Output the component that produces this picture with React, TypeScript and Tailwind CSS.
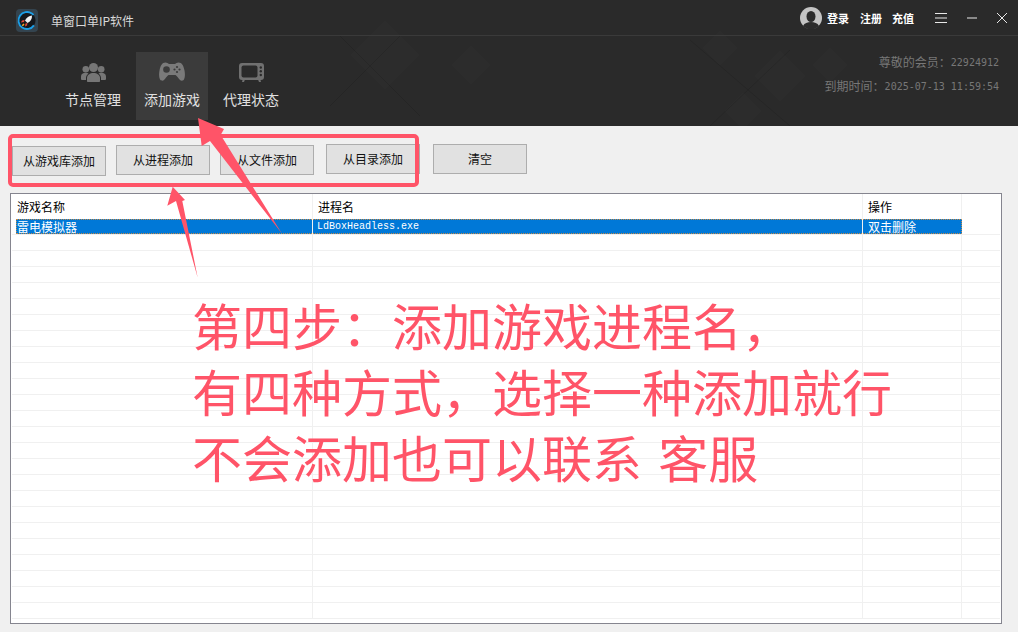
import React from 'react';

const buttons = [
  { label: '从游戏库添加', cls: 'mt-[20px] ml-0' },
  { label: '从进程添加', cls: 'mt-[19px] ml-[10px]' },
  { label: '从文件添加', cls: 'mt-[19px] ml-[10px]' },
  { label: '从目录添加', cls: 'mt-[18px] ml-[12px]' },
  { label: '清空', cls: 'mt-[18px] ml-[13px]' },
];

const emptyRows = Array.from({ length: 24 }, (_, i) => i);

const UsersIcon = () => (
  <svg width="25" height="19" viewBox="0 0 25 19" fill="#767676">
    <circle cx="4.800" cy="6.200" r="3.300" />
    <circle cx="20.200" cy="6.200" r="3.300" />
    <path d="M0 16v-2.500C0 11 2 9.800 4.800 9.800c1.200 0 2 .2 2.700.6-1.500 1.200-2.500 2.800-2.500 4.600v2H1.500C.6 17 0 16.700 0 16z" />
    <path d="M25 16v-2.500c0-2.500-2-3.700-4.800-3.700-1.200 0-2 .2-2.700.6 1.500 1.200 2.500 2.800 2.500 4.600v2h3.500c.9 0 1.500-.3 1.500-1z" />
    <circle cx="12.500" cy="4.500" r="4.500" />
    <path d="M7 19c-.6 0-1-.4-1-1v-3c0-3 3-5 6.500-5s6.500 2 6.500 5v3c0 .6-.4 1-1 1z" />
  </svg>
);

const GamepadIcon = () => (
  <svg width="26" height="20" viewBox="0 0 26 20">
    <path
      d="M6.500 .5C8 .5 9 1.500 10 2h6c1-.5 2-1.500 3.500-1.500 3.500 0 5 3 6 8 .5 3 .8 6-.5 9-1 1.500-3 1.500-4 .5-1.500-1.500-3-4-4.500-5H9.500C8 14 6.500 16.500 5 18c-1 1-3 1-4-.5-1.300-3-1-6-.5-9 1-5 2.500-8 6-8z"
      fill="#7a7a7a"
    />
    <circle cx="7.500" cy="7.500" r="3.300" fill="#3b3b3b" />
    <g fill="#3b3b3b">
      <circle cx="18" cy="5" r="1.100" />
      <circle cx="18" cy="10" r="1.100" />
      <circle cx="15.500" cy="7.500" r="1.100" />
      <circle cx="20.500" cy="7.500" r="1.100" />
    </g>
  </svg>
);

const TvIcon = () => (
  <svg width="25" height="19" viewBox="0 0 25 19" fill="#707070">
    <path d="M3 0h19a3 3 0 0 1 3 3v11a3 3 0 0 1-3 3h-.5l.5 2h-2l-.8-2H5.800L5 19H3l.5-2H3a3 3 0 0 1-3-3V3a3 3 0 0 1 3-3z" />
    <rect x="2.500" y="2.500" width="16" height="12" rx="2" fill="#2a2a2a" />
    <circle cx="21.800" cy="4.500" r="1.200" fill="#2a2a2a" />
    <circle cx="21.800" cy="8.300" r="1.200" fill="#2a2a2a" />
    <circle cx="21.800" cy="12" r="1.200" fill="#2a2a2a" />
  </svg>
);

const Logo = () => (
  <svg width="22" height="23" viewBox="0 0 22 23">
    <rect width="22" height="23" rx="4" fill="#34444f" />
    <circle cx="11" cy="11.500" r="8.500" fill="#15181c" stroke="#1b9fe8" strokeWidth="1.800" strokeDasharray="42 12" transform="rotate(35 11 11.500)" />
    <path d="M16 6.500c-3 .3-5.500 2-7 5l2.500 2.500c3-1.500 4.700-4 4.500-7.500z" fill="#f2f2f2" />
    <path d="M8.500 11 6 11.500l-1 2 3-.5zM11.500 14l-.5 2.500-2 1 .5-3z" fill="#e04a3c" />
    <path d="M7.500 14.500c-1 .5-1.500 1.500-1.500 2.500 1 0 2-.5 2.500-1.500z" fill="#f5a623" />
  </svg>
);

const Avatar = () => (
  <svg width="22" height="22" viewBox="0 0 22 22">
    <circle cx="11" cy="11" r="11" fill="#c4c4c4" />
    <ellipse cx="11" cy="9.500" rx="4.500" ry="5.500" fill="#2c2c2c" />
    <path d="M3 19c1.500-3 4.500-4 8-4s6.500 1 8 4a11 11 0 0 1-16 0z" fill="#2c2c2c" />
  </svg>
);

export default function App() {
  return (
    <div className="relative flex h-[632px] w-[1018px] flex-col overflow-hidden bg-[#f0f0f0] font-['Noto_Sans_CJK_SC',sans-serif]">
      <header className="relative h-[126px] shrink-0 overflow-hidden bg-[#2a2a2a]">
        {/* faint diamond texture behind the nav */}
        <svg className="absolute inset-0" width="1018" height="126" viewBox="0 0 1018 126">
          <g fill="#ffffff" fillOpacity="0.01">
            <path d="M471 45 491 65 471 85 451 65z" />
            <path d="M385 20 420 55 385 90 350 55z" />
            <path d="M720 30 738 48 720 66 702 48z" />
            <path d="M830 47 848 65 830 83 812 65z" />
            <path d="M743 92 762 111 743 130 724 111z" />
            <path d="M780 50 806 76 780 102 754 76z" />
          </g>
          <g stroke="#000000" strokeOpacity="0.1" fill="none">
            <path d="M340 36 420 116M400 36 330 106" />
            <path d="M690 40 790 126M790 50 710 126" />
          </g>
        </svg>

        <div className="relative flex h-[36px] items-center border-b border-[#3a3a3a] pl-[16px] pr-[11px]">
          <div className="mt-[5px] flex">
            <Logo />
          </div>
          <span className="ml-[13px] mt-[6px] text-[12px] text-[#d8d8d8]">单窗口单IP软件</span>
          <div className="ml-auto flex items-center">
            <Avatar />
            <span className="ml-[5px] mt-[2px] text-[11px] font-bold text-white">登录</span>
            <span className="ml-[11px] mt-[2px] text-[11px] font-bold text-white">注册</span>
            <span className="ml-[10px] mt-[2px] text-[11px] font-bold text-white">充值</span>
            <svg className="ml-[21px]" width="12" height="10" viewBox="0 0 12 10" stroke="#e8e8e8" strokeWidth="1">
              <path d="M0 .5h12M0 5h12M0 9.500h12" />
            </svg>
            <svg className="ml-[20px]" width="10" height="2" viewBox="0 0 10 2" stroke="#e8e8e8" strokeWidth="1">
              <path d="M0 1h10" />
            </svg>
            <svg className="ml-[20px]" width="10" height="10" viewBox="0 0 10 10" stroke="#e8e8e8" strokeWidth="1">
              <path d="m0 0 10 10M10 0 0 10" />
            </svg>
          </div>
        </div>

        <div className="relative flex items-start justify-between pr-[19px]">
          <nav className="ml-[57px] mt-[16px] flex gap-[7px]">
            <div className="flex h-[68px] w-[72px] flex-col items-center pt-[11px]">
              <UsersIcon />
              <span className="mt-[7px] text-[14px] leading-[20px] text-[#e0e0e0]">节点管理</span>
            </div>
            <div className="flex h-[68px] w-[72px] flex-col items-center bg-[#3b3b3b] pt-[10px]">
              <GamepadIcon />
              <span className="mt-[7px] text-[14px] leading-[20px] text-[#e0e0e0]">添加游戏</span>
            </div>
            <div className="flex h-[68px] w-[72px] flex-col items-center pt-[11px]">
              <TvIcon />
              <span className="mt-[7px] text-[14px] leading-[20px] text-[#e0e0e0]">代理状态</span>
            </div>
          </nav>
          <div className="mt-[17px] flex flex-col items-end gap-[6px] text-[12px] text-[#777777]">
            <div className="flex h-[18px] items-center">
              尊敬的会员：<span className="font-['DejaVu_Sans_Mono',monospace] text-[10px]">22924912</span>
            </div>
            <div className="flex h-[18px] items-center">
              到期时间：<span className="font-['DejaVu_Sans_Mono',monospace] text-[10px]">2025-07-13 11:59:54</span>
            </div>
          </div>
        </div>
      </header>

      <div className="flex h-[67px] shrink-0 items-start pl-[12px]">
        {buttons.map((b) => (
          <div
            key={b.label}
            className={`flex h-[30px] w-[94px] items-center justify-center border border-[#adadad] bg-[#e1e1e1] text-[12px] text-[#111111] ${b.cls}`}
          >
            {b.label}
          </div>
        ))}
      </div>

      <div className="mx-[10px] h-[431px] w-[992px] overflow-hidden border border-[#85858f] bg-white pl-[1px] pr-[1px]">
        <div className="flex h-[25px] items-center text-[12px] text-black">
          <div className="h-full w-[300px] pl-[5px] pt-[4px]">游戏名称</div>
          <div className="h-full w-[550px] border-l border-[#f0f0f0] pl-[5px] pt-[4px]">进程名</div>
          <div className="h-full w-[100px] border-x border-[#f0f0f0] pl-[5px] pt-[4px]">操作</div>
        </div>
        <div className="flex h-[16px] border-b border-[#f0f0f0]">
          <div className="ml-[4px] flex h-[15px] w-[946px] bg-[#0078d7] text-white outline-1 -outline-offset-1 outline-dotted outline-[#c28a4a]">
            <div className="w-[296px] pl-[1px] text-[12px] leading-[15px]">雷电模拟器</div>
            <div className="w-[550px] border-l border-[#f0f0f0] pl-[4px] font-['Liberation_Mono',monospace] text-[10px] leading-[16px]">
              LdBoxHeadless.exe
            </div>
            <div className="w-[100px] border-l border-[#f0f0f0] pl-[5px] text-[12px] leading-[15px]">双击删除</div>
          </div>
        </div>
        {emptyRows.map((i) => (
          <div key={i} className="flex h-[16px] border-b border-[#f0f0f0]">
            <div className="w-[300px]" />
            <div className="w-[550px] border-l border-[#f0f0f0]" />
            <div className="w-[100px] border-x border-[#f0f0f0]" />
          </div>
        ))}
      </div>

      {/* annotation drawn over the screenshot */}
      <svg className="pointer-events-none absolute inset-0" width="1018" height="632" viewBox="0 0 1018 632">
        <rect x="10" y="136" width="407" height="49" rx="3" fill="none" stroke="#ff5468" strokeWidth="4" />
        <path d="M198 118 224 129 220.700 135 281.700 233.300 210 141 201.700 146z" fill="#ff5468" />
        <path d="M172.700 186.700 185 200 182.300 201 197.700 277.700 176 201 167.300 205.700z" fill="#ff5468" />
      </svg>
      <div className="pointer-events-none absolute left-[192px] top-[291px] text-[50px] leading-[66px] whitespace-pre text-[#ff5468] [word-spacing:5px]">
        {'第四步：添加游戏进程名，\n有四种方式，选择一种添加就行\n不会添加也可以联系 客服'}
      </div>
    </div>
  );
}
